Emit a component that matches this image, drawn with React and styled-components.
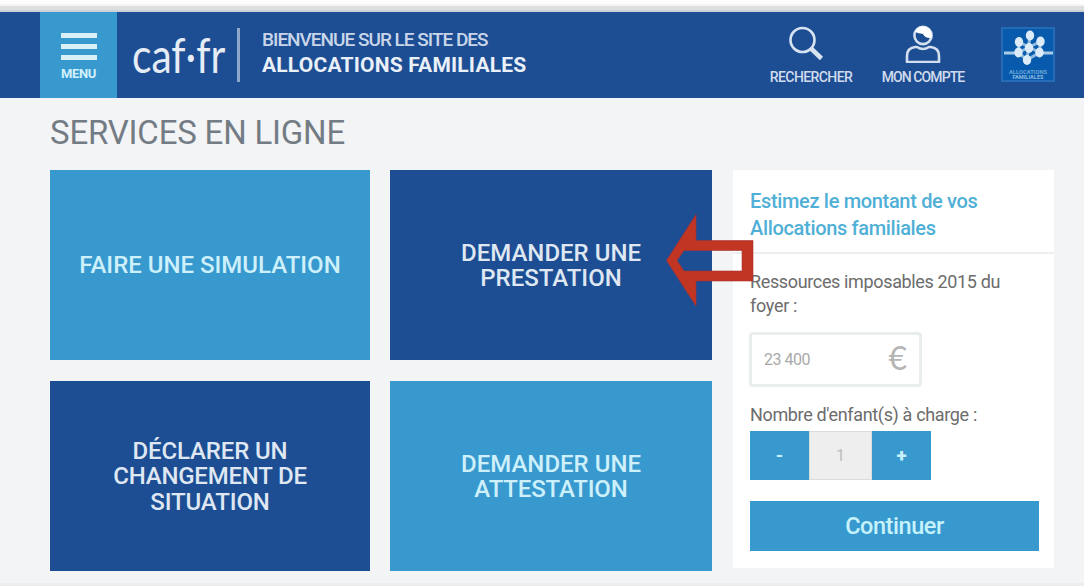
import React from "react";
import styled, { createGlobalStyle } from "styled-components";

const navy = "#1d4e93";
const sky = "#3899cf";

const Global = createGlobalStyle`
  * { box-sizing: border-box; }
  body { margin: 0; background: #f3f4f6; font-family: Roboto, "Liberation Sans", sans-serif; overflow: hidden; }
  button, input { font-family: inherit; border: 0; padding: 0; border-radius: 0; }
`;

const Page = styled.div`
  width: 1084px;
  height: 586px;
  display: flex;
  flex-direction: column;
  border-top: 4px solid #fefefe;
  border-bottom: 3px solid #ebedee;
`;

const BrowserEdge = styled.div`
  flex: none;
  height: 8px;
  background: linear-gradient(#f4f5f5 0 2px, #dcdfdd 2px 6px, #cdd2da 6px);
`;

const Header = styled.header`
  flex: none;
  display: flex;
  height: 86px;
  padding-left: 40px;
  background: ${navy};
  color: #e6ecf5;
`;

const MenuButton = styled.button`
  width: 77px;
  padding: 21px 0 0;
  display: flex;
  flex-direction: column;
  align-items: center;
  gap: 6px;
  background: ${sky};
  color: #d3f1fb;
`;

const MenuBar = styled.span`
  width: 36px;
  height: 5px;
  background: #d9f0f8;
`;

const Line = styled.span`
  display: block;
  white-space: nowrap;
  font-size: ${(p) => p.$size}px;
  font-weight: ${(p) => p.$weight || 400};
  letter-spacing: ${(p) => p.$track || 0}px;
  line-height: ${(p) => p.$lh}px;
`;

const Brand = styled.div`
  width: 107px;
  padding: 17px 0 0 15px;
  font-family: Lato, "Open Sans", sans-serif;
  transform: scaleX(0.83);
  transform-origin: 15px 0;
`;

const Divider = styled.div`
  width: 3px;
  height: 54px;
  margin: 16px 0 0 13px;
  background: #8ea7cb;
`;

const Welcome = styled.div`
  width: 300px;
  padding: 15px 0 0 22px;
  color: #c9d6ea;
`;

const Strong = styled.div`
  color: #eaf0f8;
`;

const Nav = styled.nav`
  display: flex;
  margin-left: 229px;
`;

const NavItem = styled.a`
  width: ${(p) => p.$width}px;
  display: flex;
  flex-direction: column;
  align-items: center;
  padding-top: 13px;
  color: #d2dced;
  svg { display: block; margin-bottom: 5px; margin-right: ${(p) => p.$nudge || 0}px; }
`;

const Logo = styled.a`
  margin: 15px 0 0 8px;
  svg { display: block; }
`;

const Title = styled.h1`
  margin: 0;
  height: 72px;
  padding: 15px 0 0 50px;
  color: #737c84;
`;

const Content = styled.main`
  display: grid;
  grid-template-columns: 662px 321px;
  column-gap: 21px;
  padding-left: 50px;
`;

const Tiles = styled.div`
  display: grid;
  grid-template-columns: 320px 322px;
  grid-template-rows: 190px 190px;
  gap: 21px 20px;
`;

const Tile = styled.a`
  display: flex;
  flex-direction: column;
  align-items: center;
  justify-content: center;
  padding-top: 2px;
  background: ${(p) => (p.$dark ? navy : sky)};
  color: ${(p) => (p.$dark ? "#dfe7f2" : "#cdf0fa")};
`;

const Panel = styled.form`
  height: 398px;
  background: #fff;
`;

const PanelTitle = styled.h2`
  margin: 0;
  height: 84px;
  padding: 18px 0 0 17px;
  border-bottom: 2px solid #ecefee;
  color: #4fafd6;
`;

const PanelBody = styled.div`
  padding: 16px 15px 0 17px;
  color: #6c6c6c;
`;

const AmountField = styled.label`
  width: 173px;
  height: 55px;
  margin: 14px 0 17px -1px;
  padding: 0 12px 0 12px;
  display: flex;
  align-items: center;
  justify-content: space-between;
  border: 3px solid #e9eded;
  border-radius: 4px;
  color: #a9a9a9;
`;

const Euro = styled.span`
  font: 400 32px/36px Lato, "Open Sans", sans-serif;
  color: #b5b5b5;
  padding-bottom: 3px;
`;

const Stepper = styled.div`
  display: grid;
  grid-template-columns: 59px 63px 59px;
  height: 49px;
  margin: 5px 0 21px;
`;

const StepButton = styled.button`
  display: grid;
  place-items: center;
  background: ${sky};
  color: #c6effa;
`;

const StepValue = styled.div`
  display: grid;
  place-items: center;
  background: #eeeeee;
  border: 1px solid #d9dddd;
  color: #bdbdbd;
`;

const Submit = styled.button`
  width: 289px;
  height: 50px;
  display: grid;
  place-items: center;
  background: ${sky};
  color: #c6f2fb;
`;

const Pointer = styled.svg`
  position: absolute;
  left: 665px;
  top: 212px;
`;

const SearchIcon = () => (
  <svg width="36" height="38" viewBox="0 0 36 38" fill="none" stroke="#d8e3f1">
    <circle cx="14.500" cy="15" r="12" strokeWidth="2.600" />
    <path d="M22.500 23 L33.500 33.500" strokeWidth="4.500" />
  </svg>
);

const UserIcon = () => (
  <svg width="36" height="38" viewBox="0 0 36 38" fill="none" stroke="#d3dfef" strokeWidth="2.600">
    <circle cx="18" cy="10.500" r="8.600" />
    <path d="M10 6.500 C12 2.500 15 1.500 18 1.500 C24 1.500 28 6.500 26.500 13 C22 13.500 19.500 12 18 9 C15 8.500 12 8 10 6.500Z" fill="#fff" stroke="none" />
    <path d="M10.500 22 H12 Q18 26 24 22 H25.500 C31 22.500 34 26 34 31 V37 H2 V31 C2 26 5 22.500 10.500 22Z" strokeLinejoin="round" />
  </svg>
);

const figures = [[29, 8.5], [18, 15], [39.5, 14.5], [17.5, 25.5], [28, 21], [38.5, 25.5], [26, 33]];

const FamilyLogo = () => (
  <svg width="54" height="55" viewBox="0 0 54 55">
    <rect x="1" y="1" width="52" height="53" fill="#075aac" stroke="#246cb6" strokeWidth="2" />
    <path d="M3 26 H14 M42 26 H52" stroke="#a9cbe8" strokeWidth="3" />
    <path d="M29 8.500 L26 33 M18 15 L38.500 25.500 M39.500 14.500 L17.500 25.500 M18 15 L17.500 25.500 L26 33 L38.500 25.500 L39.500 14.500" stroke="#8fbbe1" strokeWidth="3" fill="none" />
    {figures.map(([x, y]) => (
      <ellipse key={`${x}-${y}`} cx={x} cy={y} rx="4.200" ry="5" fill="#dcebf7" />
    ))}
    <text x="27" y="46.500" textAnchor="middle" fontSize="5.500" fontWeight="700" fill="#6ca7d8" textLength="38" lengthAdjust="spacingAndGlyphs">ALLOCATIONS</text>
    <text x="27" y="52" textAnchor="middle" fontSize="5.500" fontWeight="700" fill="#8dbbe2" textLength="31" lengthAdjust="spacingAndGlyphs">FAMILIALES</text>
  </svg>
);

const tiles = [
  { lines: [["FAIRE UNE SIMULATION", 0]] },
  { lines: [["DEMANDER UNE", 0], ["PRESTATION", 0]], dark: true },
  { lines: [["DÉCLARER UN", -0.15], ["CHANGEMENT DE", -0.2], ["SITUATION", -0.1]], dark: true },
  { lines: [["DEMANDER UNE", 0], ["ATTESTATION", -0.15]] },
];

export default function App() {
  return (
    <Page>
      <Global />
      <BrowserEdge />
      <Header>
        <MenuButton>
          <MenuBar /><MenuBar /><MenuBar />
          <Line $size={13} $lh={16} $weight={700} $track={-0.3}>MENU</Line>
        </MenuButton>
        <Brand><Line $size={49} $lh={50}>caf·fr</Line></Brand>
        <Divider />
        <Welcome>
          <Line $size={19} $lh={26} $weight={500} $track={-1}>BIENVENUE SUR LE SITE DES</Line>
          <Strong><Line $size={21} $lh={25} $weight={700} $track={0.2}>ALLOCATIONS FAMILIALES</Line></Strong>
        </Welcome>
        <Nav>
          <NavItem $width={84} $nudge={10}><SearchIcon /><Line $size={14} $lh={18} $weight={500} $track={-0.6}>RECHERCHER</Line></NavItem>
          <NavItem $width={140}><UserIcon /><Line $size={14} $lh={18} $weight={500} $track={-0.9}>MON COMPTE</Line></NavItem>
        </Nav>
        <Logo><FamilyLogo /></Logo>
      </Header>
      <Title><Line $size={33} $lh={40} $track={-0.2}>SERVICES EN LIGNE</Line></Title>
      <Content>
        <Tiles>
          {tiles.map((tile, i) => (
            <Tile key={i} $dark={tile.dark}>
              {tile.lines.map(([text, track]) => (
                <Line key={text} $size={24} $lh={25.5} $weight={500} $track={track}>{text}</Line>
              ))}
            </Tile>
          ))}
        </Tiles>
        <Panel>
          <PanelTitle>
            <Line $size={20} $lh={26.5} $weight={500} $track={-0.33}>Estimez le montant de vos</Line>
            <Line $size={20} $lh={26.5} $weight={500} $track={-0.33}>Allocations familiales</Line>
          </PanelTitle>
          <PanelBody>
            <Line $size={18} $lh={24} $track={-0.36}>Ressources imposables 2015 du</Line>
            <Line $size={18} $lh={24} $track={-0.3}>foyer :</Line>
            <AmountField>
              <Line $size={16} $lh={20} $track={-0.5}>23 400</Line>
              <Euro>€</Euro>
            </AmountField>
            <Line $size={18} $lh={22} $track={-0.35}>Nombre d'enfant(s) à charge :</Line>
            <Stepper>
              <StepButton type="button"><Line $size={19} $lh={20} $weight={700}>-</Line></StepButton>
              <StepValue><Line $size={16} $lh={20}>1</Line></StepValue>
              <StepButton type="button"><Line $size={19} $lh={20} $weight={900}>+</Line></StepButton>
            </Stepper>
            <Submit type="button"><Line $size={23.5} $lh={28} $weight={500} $track={-0.45}>Continuer</Line></Submit>
          </PanelBody>
        </Panel>
      </Content>
      <Pointer width="90" height="98" viewBox="0 0 90 98">
        <path fillRule="evenodd" fill="#c13523" stroke="#a82f33" strokeWidth="0.600" d="M1.500 48.500 L31 2.500 V28.500 H88 V69 H31 V94Z M12 48.500 L19 38.500 H77 V59 H19Z" />
      </Pointer>
    </Page>
  );
}
